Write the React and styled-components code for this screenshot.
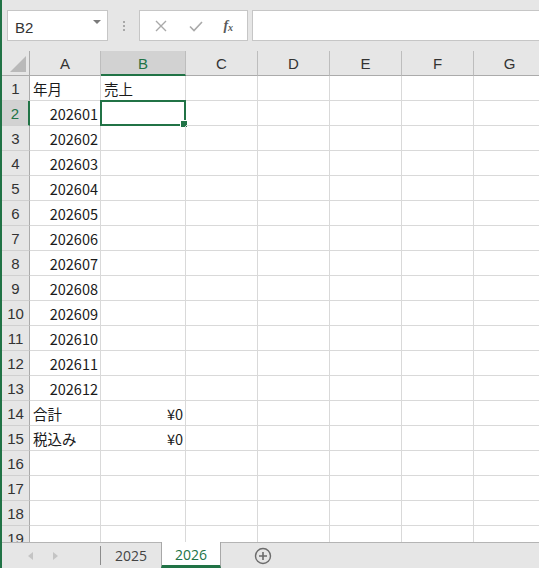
import React from "react";
import styled, { createGlobalStyle } from "styled-components";

const GREEN = "#217346";
const UI_FONT = `"Liberation Sans", "Open Sans", Arial, sans-serif`;
const CELL_FONT = `"Noto Sans CJK JP", "Noto Sans", sans-serif`;

const columns = ["A", "B", "C", "D", "E", "F", "G"];
const colWidths = [71, 85, 72, 72, 72, 72, 72];

// sheet contents, keyed by row number
const data = {
  1: { A: { v: "年月" }, B: { v: "売上" } },
  14: { A: { v: "合計" }, B: { v: "¥0", num: true } },
  15: { A: { v: "税込み" }, B: { v: "¥0", num: true } },
};
for (let m = 1; m <= 12; m++) {
  data[m + 1] = { A: { v: `2026${String(m).padStart(2, "0")}`, num: true } };
}

const rows = Array.from({ length: 19 }, (_, i) => i + 1);
const selected = { row: 2, col: "B" };

const GlobalStyle = createGlobalStyle`
  html, body {
    margin: 0;
    padding: 0;
    background: #fff;
  }
  * { box-sizing: border-box; }
`;

const Window = styled.div`
  width: 539px;
  height: 568px;
  display: flex;
  flex-direction: column;
  border-left: 2px solid ${GREEN};
  background: #e6e6e6;
  overflow: hidden;
  font-family: ${UI_FONT};
`;

/* formula bar */
const Toolbar = styled.div`
  height: 51px;
  flex: none;
  display: flex;
  align-items: flex-start;
  padding: 10px 0 0 5px;
`;

const NameBox = styled.div`
  width: 101px;
  height: 31px;
  background: #fff;
  border: 1px solid #c6c6c6;
  display: flex;
  align-items: center;
  justify-content: space-between;
  padding: 3px 6px 0 7px;
  font-size: 15px;
  color: #333;
`;

const DropArrow = styled.span`
  width: 0;
  height: 0;
  border-left: 4px solid transparent;
  border-right: 4px solid transparent;
  border-top: 4px solid #7a7a7a;
  margin-top: -10px;
`;

const Grip = styled.div`
  width: 31px;
  height: 31px;
  display: flex;
  flex-direction: column;
  align-items: center;
  justify-content: center;
  gap: 2px;
  span {
    width: 2px;
    height: 2px;
    background: #a8a8a8;
  }
`;

const FxButtons = styled.div`
  width: 109px;
  height: 31px;
  background: #fff;
  border: 1px solid #c6c6c6;
  display: flex;
  align-items: center;
  justify-content: space-around;
  padding: 0 4px;
`;

const FxLabel = styled.span`
  font-family: "Liberation Serif", "DejaVu Serif", serif;
  font-style: italic;
  font-weight: bold;
  font-size: 14px;
  color: #5a5a5a;
  sub {
    font-size: 10px;
    vertical-align: -1px;
  }
`;

const FormulaInput = styled.div`
  flex: 1;
  height: 31px;
  margin-left: 4px;
  background: #fff;
  border: 1px solid #c6c6c6;
  border-right: none;
`;

/* grid */
const Sheet = styled.div`
  flex: 1;
  overflow: hidden;
  background: #fff;
`;

const Grid = styled.div`
  display: grid;
  grid-template-columns: 28px ${colWidths.map((w) => `${w}px`).join(" ")};
  grid-auto-rows: 25px;
  width: max-content;
`;

const Corner = styled.div`
  background: #e6e6e6;
  border-right: 1px solid #ababab;
  border-bottom: 1px solid #ababab;
  position: relative;
  &::after {
    content: "";
    position: absolute;
    right: 3px;
    bottom: 3px;
    width: 0;
    height: 0;
    border-left: 16px solid transparent;
    border-bottom: 16px solid #b9b9b9;
  }
`;

const ColHeader = styled.div`
  background: ${(p) => (p.$active ? "#d2d2d2" : "#e6e6e6")};
  color: ${(p) => (p.$active ? GREEN : "#333")};
  border-right: 1px solid #bdbdbd;
  border-bottom: ${(p) => (p.$active ? `2px solid ${GREEN}` : "1px solid #ababab")};
  display: flex;
  align-items: center;
  justify-content: center;
  font-size: 15px;
  padding-top: ${(p) => (p.$active ? "1px" : "0")};
`;

const RowHeader = styled.div`
  background: ${(p) => (p.$active ? "#d2d2d2" : "#e6e6e6")};
  color: ${(p) => (p.$active ? GREEN : "#333")};
  border-right: ${(p) => (p.$active ? `2px solid ${GREEN}` : "1px solid #ababab")};
  border-bottom: 1px solid #d0d0d0;
  display: flex;
  align-items: center;
  justify-content: center;
  font-size: 15px;
`;

const Cell = styled.div`
  position: relative;
  border-right: 1px solid #d9d9d9;
  border-bottom: 1px solid #d9d9d9;
  font-family: ${CELL_FONT};
  font-size: 14.5px;
  color: #1a1a1a;
  display: flex;
  align-items: center;
  justify-content: ${(p) => (p.$num ? "flex-end" : "flex-start")};
  padding: 0 2px 0 3px;
  white-space: nowrap;
`;

const Selection = styled.div`
  position: absolute;
  left: -1px;
  top: -1px;
  right: -1px;
  bottom: -1px;
  border: 2px solid ${GREEN};
  pointer-events: none;
  &::after {
    content: "";
    position: absolute;
    right: -4px;
    bottom: -4px;
    width: 6px;
    height: 6px;
    background: ${GREEN};
    border: 1px solid #fff;
  }
`;

/* sheet tabs */
const TabBar = styled.div`
  height: 26px;
  flex: none;
  display: flex;
  align-items: stretch;
  border-top: 1px solid #b4b4b4;
  background: #e6e6e6;
  font-size: 14px;
`;

const Nav = styled.div`
  width: 99px;
  display: flex;
  align-items: center;
  padding-left: 26px;
  gap: 20px;
  border-right: 1px solid #8c8c8c;
  margin: 3px 0 3px;
`;

const NavArrow = styled.span`
  width: 0;
  height: 0;
  border-top: 4px solid transparent;
  border-bottom: 4px solid transparent;
  ${(p) =>
    p.$dir === "left"
      ? "border-right: 5px solid #c4c4c4;"
      : "border-left: 5px solid #c4c4c4;"}
`;

const Tab = styled.div`
  width: 60px;
  display: flex;
  align-items: center;
  justify-content: center;
  color: ${(p) => (p.$active ? GREEN : "#444")};
  background: ${(p) => (p.$active ? "#fff" : "transparent")};
  border-left: ${(p) => (p.$active ? "1px solid #a8a8a8" : "none")};
  border-right: ${(p) => (p.$active ? "1px solid #a8a8a8" : "none")};
  border-bottom: ${(p) => (p.$active ? `3px solid ${GREEN}` : "none")};
  margin-top: ${(p) => (p.$active ? "-1px" : "0")};
  padding-top: ${(p) => (p.$active ? "2px" : "0")};
  font-family: "Open Sans", ${UI_FONT};
  font-size: 14px;
`;

const AddSheet = styled.div`
  display: flex;
  align-items: center;
  padding-left: 33px;
`;

const App = () => {
  return (
    <>
      <GlobalStyle />
      <Window>
        <Toolbar>
          <NameBox>
            B2
            <DropArrow />
          </NameBox>
          <Grip>
            <span />
            <span />
            <span />
          </Grip>
          <FxButtons>
            <svg width="14" height="14" viewBox="0 0 14 14">
              <path d="M2 2 L12 12 M12 2 L2 12" stroke="#a9a9a9" strokeWidth="1.4" />
            </svg>
            <svg width="16" height="14" viewBox="0 0 16 14">
              <path d="M2 7.5 L6 11.5 L14 3" stroke="#a9a9a9" strokeWidth="1.6" fill="none" />
            </svg>
            <FxLabel>
              f<sub>x</sub>
            </FxLabel>
          </FxButtons>
          <FormulaInput />
        </Toolbar>

        <Sheet>
          <Grid>
            <Corner />
            {columns.map((c) => (
              <ColHeader key={c} $active={c === selected.col}>
                {c}
              </ColHeader>
            ))}
            {rows.map((r) => (
              <React.Fragment key={r}>
                <RowHeader $active={r === selected.row}>{r}</RowHeader>
                {columns.map((c) => {
                  const cell = data[r] && data[r][c];
                  const isSel = r === selected.row && c === selected.col;
                  return (
                    <Cell key={c} $num={cell && cell.num}>
                      {cell ? cell.v : ""}
                      {isSel && <Selection />}
                    </Cell>
                  );
                })}
              </React.Fragment>
            ))}
          </Grid>
        </Sheet>

        <TabBar>
          <Nav>
            <NavArrow $dir="left" />
            <NavArrow $dir="right" />
          </Nav>
          <Tab>2025</Tab>
          <Tab $active>2026</Tab>
          <AddSheet>
            <svg width="18" height="18" viewBox="0 0 18 18">
              <circle cx="9" cy="9" r="7.5" stroke="#6b6b6b" strokeWidth="1.4" fill="none" />
              <path d="M9 5 V13 M5 9 H13" stroke="#6b6b6b" strokeWidth="1.6" />
            </svg>
          </AddSheet>
        </TabBar>
      </Window>
    </>
  );
};

export default App;
